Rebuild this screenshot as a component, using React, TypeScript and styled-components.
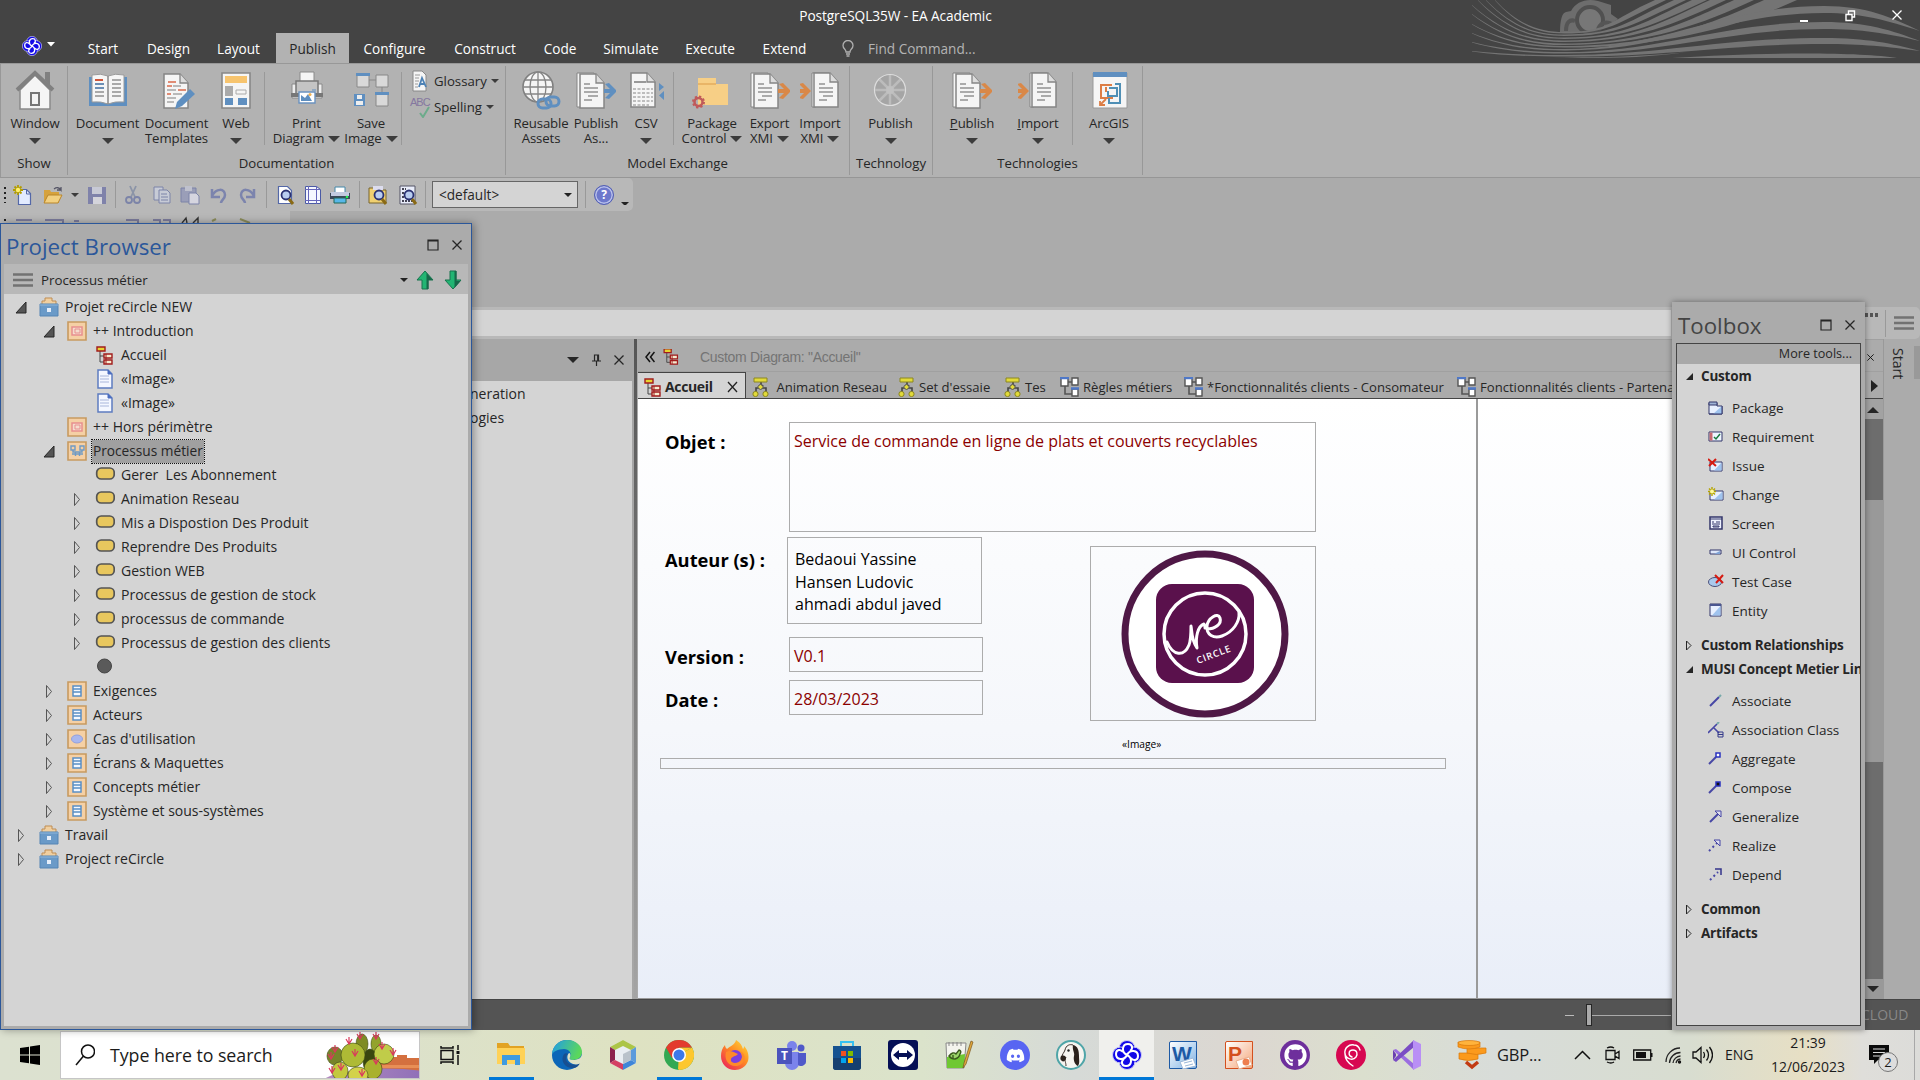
import React from 'react';
import styled, { createGlobalStyle, css } from 'styled-components';
import { FaDiscord, FaGithub } from 'react-icons/fa';

const Global = createGlobalStyle`
  * { box-sizing: border-box; }
  html, body { margin: 0; padding: 0; }
  body { width: 1920px; height: 1080px; overflow: hidden; background: #ababab; }
`;

const Screen = styled.div`
  position: relative;
  width: 1920px;
  height: 1080px;
  overflow: hidden;
  display: flex;
  flex-direction: column;
  background: #ababab;
  color: #262626;
  font: 14px/18px 'Open Sans', 'Noto Sans', sans-serif;
  white-space: pre;
  svg { display: block; flex: none; }
`;

/* ---------- title bar and ribbon tabs ---------- */
const Header = styled.header`
  position: relative;
  flex: none;
  height: 63px;
  background: #444;
  color: #fff;
  display: flex;
  flex-direction: column;
`;
const Decor = styled.svg`
  position: absolute;
  right: 0;
  top: 0;
`;
const TitleRow = styled.div`
  position: relative;
  height: 33px;
  padding: 0 18px 2px 0;
  display: flex;
  align-items: center;
`;
const Title = styled.div`
  flex: 1;
  padding-right: 8px;
  text-align: center;
  font-size: 13.7px;
  letter-spacing: -0.1px;
`;
const WinButtons = styled.div`
  display: flex;
  gap: 36px;
`;
const TabRow = styled.nav`
  position: relative;
  display: flex;
  height: 30px;
`;
const AppButton = styled.div`
  width: 70px;
  padding: 3px 0 0 22px;
  display: flex;
  gap: 5px;
`;
const MenuTab = styled.div<{ $w: number; $on?: boolean }>`
  width: ${p => p.$w}px;
  padding-top: 1px;
  display: flex;
  align-items: center;
  justify-content: center;
  font-size: 13.6px;
  ${p => p.$on && css`background: #b2b2b2; color: #262626;`}
`;
const Finder = styled.div`
  display: flex;
  align-items: center;
  gap: 14px;
  margin-left: 21px;
  padding-top: 1px;
  color: #b4b4b4;
  font-size: 13.6px;
`;

/* ---------- ribbon ---------- */
const Ribbon = styled.section`
  flex: none;
  height: 115px;
  display: flex;
  background: #b2b2b2;
  border-top: 1px solid #989898;
  border-bottom: 1px solid #969696;
  border-left: 1px solid #989898;
  font-size: 13.2px;
`;
const Group = styled.div<{ $w: number }>`
  width: ${p => p.$w}px;
  height: 109px;
  margin-top: 2px;
  border-right: 1px solid #989898;
  display: flex;
  flex-direction: column;
`;
const GroupBody = styled.div<{ $pad?: number }>`
  display: flex;
  height: 88px;
  padding: 4px 0 0 ${p => p.$pad || 0}px;
`;
const GroupLabel = styled.div`
  text-align: center;
`;
const BigButton = styled.div<{ $w: number }>`
  width: ${p => p.$w}px;
  flex: none;
  display: flex;
  flex-direction: column;
  align-items: center;
  line-height: 15px;
  text-align: center;
  letter-spacing: -0.1px;
`;
const IconSlot = styled.div`
  height: 46px;
`;
const Caption = styled.div<{ $drop?: boolean }>`
  display: flex;
  align-items: center;
  gap: 4px;
  height: 15px;
  padding-top: ${p => (p.$drop ? 5 : 0)}px;
`;
const Divider = styled.i<{ $h: number; $l?: number; $r?: number; $t?: number }>`
  flex: none;
  width: 1px;
  height: ${p => p.$h}px;
  margin: ${p => p.$t || 0}px ${p => p.$r || 0}px 0 ${p => p.$l || 0}px;
  background: #999;
`;
const Triangle = styled.i<{ $s?: number; $c?: string }>`
  flex: none;
  width: 0;
  height: 0;
  border: ${p => p.$s || 5}px solid transparent;
  border-top-color: ${p => p.$c || '#3c3c3c'};
  border-bottom-width: 0;
`;
const SmallColumn = styled.div`
  display: flex;
  flex-direction: column;
  gap: 4px;
  padding-left: 8px;
`;
const SmallButton = styled.div`
  display: flex;
  align-items: center;
  height: 22px;
  gap: 4px;
`;

/* ---------- tool strips ---------- */
const Strip = styled.div`
  flex: none;
  width: 633px;
  height: 33px;
  background: #b8b8b8;
  border-radius: 0 5px 5px 0;
  display: flex;
  align-items: center;
`;
const StripIcon = styled.div<{ $w: number; $dim?: boolean }>`
  width: ${p => p.$w}px;
  flex: none;
  display: flex;
  justify-content: center;
  opacity: ${p => (p.$dim ? 0.55 : 1)};
`;
const Combo = styled.div`
  flex: none;
  width: 146px;
  height: 27px;
  margin: 0 7px 0 6px;
  padding: 0 5px 0 6px;
  border: 1px solid #666;
  background: #d4d4d4;
  display: flex;
  align-items: center;
  justify-content: space-between;
  font-size: 13.6px;
`;
const SecondStrip = styled.div`
  flex: none;
  width: 290px;
  height: 96px;
  background: linear-gradient(#b8b8b8 0 30px, #ababab 30px);
`;
const WideBar = styled.div`
  flex: none;
  height: 32px;
  background: #b8b8b8;
  border-radius: 0 5px 5px 0;
  display: flex;
  align-items: center;
  padding-right: 6px;
`;
const WideField = styled.div`
  width: 1671px;
  height: 26px;
  background: #d4d4d4;
`;

/* ---------- workspace ---------- */
const Work = styled.main`
  flex: none;
  height: 660px;
  display: flex;
`;
const SidePane = styled.aside`
  width: 634px;
  display: flex;
  flex-direction: column;
`;
const SideHead = styled.div`
  height: 42px;
  padding-right: 10px;
  display: flex;
  justify-content: flex-end;
  align-items: center;
  gap: 13px;
  background: #a7a7a7;
`;
const SideBody = styled.div`
  flex: 1;
  background: #d4d4d4;
  border-right: 2px solid #a6a6a6;
  padding: 1px 0 0 470px;
  line-height: 24px;
`;
const Splitter = styled.i`
  width: 4px;
  border-right: 1px solid #aaa;
  background: linear-gradient(#555, #a4a4a4);
`;
const Center = styled.section`
  width: 1245px;
  display: flex;
  flex-direction: column;
`;
const DiagramHead = styled.div`
  height: 33px;
  padding: 3px 9px 0 7px;
  display: flex;
  align-items: center;
  border-bottom: 1px solid #a0a0a0;
  border-top: 1px solid #a0a0a0;
  font-family: 'Liberation Sans', sans-serif;
  font-size: 14px;
  color: #747474;
  letter-spacing: -0.3px;
`;
const HeadText = styled.span`
  flex: 1;
`;
const DiagramTabs = styled.div`
  height: 27px;
  display: flex;
  overflow: hidden;
  border-bottom: 1px solid #444;
`;
const DiagramTab = styled.div<{ $w: number; $on?: boolean }>`
  flex: none;
  width: ${p => p.$w}px;
  height: ${p => (p.$on ? 27 : 26)}px;
  padding: 3px 0 0 6px;
  display: flex;
  align-items: center;
  gap: 4px;
  font-size: 13.1px;
  ${p => p.$on && css`
    padding: 1px 0 0 5px;
    background: #d4d4d4;
    border: 1px solid #444;
    border-width: 1px 1px 0 0;
    font-weight: 700;
    font-size: 14px;
    letter-spacing: -0.35px;
  `}
`;
const CanvasRow = styled.div`
  flex: 1;
  display: flex;
`;
const Canvas = styled.div`
  position: relative;
  flex: 1;
  background: linear-gradient(#fff, #f5f7fb 55%, #e9eef8);
  border-bottom: 1px solid #999;
  color: #000;
`;
const Placed = styled.div<{ $x: number; $y: number; $w?: number; $h?: number; $box?: boolean; $red?: boolean; $bold?: boolean; $pad?: string }>`
  position: absolute;
  left: ${p => p.$x - 638}px;
  top: ${p => p.$y - 399}px;
  ${p => p.$w && css`width: ${p.$w}px;`}
  ${p => p.$h && css`height: ${p.$h}px;`}
  ${p => p.$box && css`border: 1px solid #acacac;`}
  color: ${p => (p.$red ? '#8b0000' : '#000')};
  font-size: ${p => (p.$bold ? 18.3 : 16)}px;
  font-weight: ${p => (p.$bold ? 700 : 400)};
  line-height: 22.5px;
  padding: ${p => p.$pad || 0};
`;
const Stereo = styled(Placed)`
  font-size: 10.2px;
`;
const PageEdge = styled.i`
  position: absolute;
  left: 838px;
  top: 0;
  bottom: 0;
  width: 2px;
  background: #9a9a9a;
`;
const ScrollColumn = styled.div`
  width: 18px;
  display: flex;
  flex-direction: column;
`;
const ScrollBtn = styled.div<{ $flip?: boolean }>`
  height: 20px;
  background: ${p => (p.$flip ? '#999' : '#a2a2a2')};
  display: flex;
  align-items: center;
  justify-content: center;
  padding-right: 3px;
`;
const ScrollPart = styled.div<{ $h: number; $c: string }>`
  height: ${p => p.$h}px;
  background: ${p => p.$c};
`;
const RightRail = styled.aside`
  flex: 1;
  display: flex;
  justify-content: space-between;
  border-left: 1px solid #999;
`;
const Vertical = styled.div`
  writing-mode: vertical-rl;
  padding: 9px 0 0 5px;
  height: 50px;
  font-size: 14px;
`;
const RailEnd = styled.i`
  width: 6px;
  height: 33px;
  margin-top: 7px;
  background: #999;
`;
const Status = styled.footer`
  flex: none;
  height: 31px;
  background: #545454;
  border-top: 1px solid #444;
  display: flex;
  align-items: center;
  padding-left: 1565px;
  color: #888;
`;
const Minus = styled.i`
  width: 9px;
  height: 1px;
  background: #bbb;
`;
const Knob = styled.i`
  width: 6px;
  height: 22px;
  margin-left: 12px;
  background: #aaa;
  border: 1px solid #262626;
`;
const Track = styled.i`
  width: 79px;
  height: 1px;
  background: #aaa;
`;
const Cloud = styled.span`
  margin-left: 190px;
`;

/* ---------- floating windows ---------- */
const BrowserWindow = styled.section`
  position: absolute;
  left: 0;
  top: 223px;
  width: 472px;
  height: 807px;
  padding: 0 3px 3px;
  border: 1px solid #2b579a;
  background: #ababab;
  box-shadow: 2px 0 8px rgba(0, 0, 0, 0.35);
  display: flex;
  flex-direction: column;
`;
const WindowTitle = styled.div<{ $blue?: boolean; $h: number }>`
  flex: none;
  height: ${p => p.$h}px;
  display: flex;
  align-items: center;
  justify-content: space-between;
  padding: ${p => (p.$blue ? '5px 6px 0 2px' : '6px 6px 0 2px')};
  color: ${p => (p.$blue ? '#2b579a' : '#444')};
  font-size: 22.3px;
  line-height: 30px;
`;
const WindowIcons = styled.div<{ $b?: number; $gap?: number; $l?: number }>`
  display: flex;
  align-items: center;
  gap: ${p => p.$gap || 13}px;
  padding-bottom: ${p => p.$b || 0}px;
  margin-left: ${p => p.$l || 0}px;
`;
const BrowserBar = styled.div`
  flex: none;
  height: 30px;
  padding: 1px 6px 0 9px;
  display: flex;
  align-items: center;
  background: #b8b8b8;
`;
const BarText = styled.div`
  flex: 1;
  padding-left: 8px;
  font-size: 13.3px;
`;
const Tree = styled.div`
  flex: 1;
  padding-top: 1px;
  background: #d4d4d4;
`;
const Row = styled.div<{ $level: number }>`
  height: 24px;
  padding-left: ${p => 7 + 28 * p.$level}px;
  display: flex;
  align-items: center;
`;
const Expander = styled.div`
  width: 28px;
  display: flex;
  padding-left: 4px;
`;
const RowIcon = styled.div`
  width: 22px;
`;
const RowText = styled.div<{ $sel?: boolean }>`
  padding: 0 1px 1px;
  margin-left: 3px;
  line-height: 22px;
  ${p => p.$sel && css`
    font-size: 13.7px;
    background: #a0a0a0;
    outline: 1px dotted #111;
  `}
`;
const ToolboxWindow = styled.section`
  position: absolute;
  left: 1672px;
  top: 302px;
  width: 193px;
  height: 728px;
  padding: 0 4px 4px;
  background: #ababab;
  box-shadow: 0 0 6px rgba(0, 0, 0, 0.4);
  display: flex;
  flex-direction: column;
`;
const ToolFrame = styled.div`
  flex: 1;
  border: 1px solid #444;
  background: #d4d4d4;
  overflow: hidden;
`;
const MoreTools = styled.div`
  height: 20px;
  padding-right: 8px;
  background: #a9a9a9;
  text-align: right;
  line-height: 20px;
  font-size: 12.6px;
`;
const ToolHead = styled.div`
  height: 24px;
  padding-left: 8px;
  display: flex;
  align-items: center;
  font-weight: 700;
  font-size: 13.5px;
  letter-spacing: -0.2px;
`;
const ToolArrow = styled.div`
  flex: none;
  width: 16px;
`;
const ToolList = styled.div`
  padding: 5px 0 8px 31px;
`;
const ToolItem = styled.div`
  height: 29px;
  display: flex;
  align-items: center;
  gap: 8px;
  font-size: 13.5px;
`;

/* ---------- taskbar ---------- */
const Taskbar = styled.footer`
  flex: none;
  height: 50px;
  display: flex;
  align-items: center;
  background: linear-gradient(90deg, #dce1d0, #dce1cb 20%, #dee2c2 33%, #dbe3cb 48%, #d6dad7 56%, #dcd7d1 65%, #dbdfce 71%, #d8dcd9 78%, #d8ddd0 88%, #e7dfc4 94%, #dfdeda 97%, #dcdcd9);
  color: #1b1b1b;
`;
const StartButton = styled.div`
  flex: none;
  width: 60px;
  padding-left: 20px;
`;
const Search = styled.div`
  flex: none;
  width: 360px;
  height: 48px;
  padding-left: 14px;
  background: #fff;
  border: 1px solid #c6c6c6;
  display: flex;
  align-items: center;
  gap: 15px;
  overflow: hidden;
  font-size: 17.8px;
  letter-spacing: -0.05px;
`;
const TaskView = styled.div`
  flex: none;
  width: 63px;
  padding-left: 20px;
`;
const TaskItem = styled.div<{ $mark?: number; $on?: boolean }>`
  flex: none;
  width: ${p => (p.$on ? 55 : 56)}px;
  margin-right: ${p => (p.$on ? 1 : 0)}px;
  height: 50px;
  display: flex;
  align-items: center;
  justify-content: center;
  background: ${p => (p.$on ? '#f0f0ed' : 'none')};
  ${p => p.$mark && css`
    background-image: linear-gradient(#0078d7, #0078d7);
    background-size: ${p.$mark}px 3px;
    background-position: center bottom;
    background-repeat: no-repeat;
  `}
`;
const RoundApp = styled.div<{ $c: string }>`
  width: 30px;
  height: 30px;
  border-radius: 50%;
  background: ${p => p.$c};
  color: #fff;
  display: flex;
  align-items: center;
  justify-content: center;
`;
const Tray = styled.div`
  flex: 1;
  display: flex;
  align-items: center;
  padding-left: 22px;
`;
const TraySlot = styled.div<{ $w: number }>`
  flex: none;
  width: ${p => p.$w}px;
  text-align: left;
`;
const Money = styled(TraySlot)`
  font-size: 16.5px;
  letter-spacing: -0.2px;
`;
const Clock = styled.div`
  width: 100px;
  text-align: center;
  line-height: 24px;
  letter-spacing: -0.05px;
  padding-bottom: 1px;
`;
const ShowDesktop = styled.i`
  width: 1px;
  height: 50px;
  margin-left: 16px;
  background: #a8a8a8;
`;

/* ---------- drawings ---------- */
type G = { w?: number; h?: number; vb?: string; children?: React.ReactNode };
const Svg = ({ w = 40, h = 40, vb, children }: G) => (
  <svg width={w} height={h} viewBox={vb || `0 0 ${w} ${h}`} fill="none">{children}</svg>
);

const CloseX = ({ s = 10, c = '#262626' }) => (
  <Svg w={s} h={s} vb="0 0 10 10"><path d="M.5 .5l9 9M9.5 .5l-9 9" stroke={c} strokeWidth="1.3" /></Svg>
);
const MaxBox = () => <Svg w={12} h={12}><path d="M1 1h10v10H1zM1 2h10" stroke="#262626" strokeWidth="1.2" /></Svg>;
const Burger = () => <Svg w={20} h={14}><path d="M0 1.5h20M0 7h20M0 12.5h20" stroke="#727272" strokeWidth="2.4" /></Svg>;

/* Four interlocking lobes around the centre. */
const EaLogo = ({ s = 20 }) => (
  <Svg w={s} h={s} vb="0 0 30 30">
    <g fill="#1208e8" stroke="#cfcff5" strokeWidth="1">
      <circle cx="15" cy="8.5" r="8" /><circle cx="21.5" cy="15" r="8" /><circle cx="15" cy="21.5" r="8" /><circle cx="8.5" cy="15" r="8" />
    </g>
    <circle cx="15" cy="15" r="9" fill="#1208e8" />
    <path d="M15 15C9 12 10 4 16 4c5 0 5 5 2 7M15 15c3-6 11-5 11 1 0 5-5 5-7 2M15 15c6 3 5 11-1 11-5 0-5-5-2-7M15 15c-3 6-11 5-11-1 0-5 5-5 7-2" stroke="#fff" strokeWidth="2" />
  </Svg>
);

const House = () => (
  <Svg><path d="M30 2h5v14l-5-6z" fill="#808080" /><path d="M5 20L20 5l15 15v19H5z" fill="#f5f5f5" stroke="#8a8a8a" strokeWidth="1.5" /><path d="M2 20L20 3l18 17" stroke="#808080" strokeWidth="4" /><path d="M16 23h8v12h-8z" stroke="#777" strokeWidth="2" /></Svg>
);
const Book = () => (
  <Svg><path d="M1 7h38v29H1z" fill="#5f8fc0" /><path d="M4 5q9-2 16 1 7-3 16-1v27q-9-1-16 2-7-3-16-2z" fill="#f6f6f6" stroke="#9a9a9a" /><path d="M20 6v28" stroke="#888" strokeWidth="1.5" /><path d="M7 10h8" stroke="#d0563a" strokeWidth="2" /><path d="M7 14h9M7 18h9" stroke="#6d8fb5" strokeWidth="2" /><path d="M7 22h9M7 26h9M24 10h9M24 14h9M24 18h9M24 22h9M24 26h9" stroke="#aaa" strokeWidth="2" /></Svg>
);
const Sheet = ({ x = 4, y = 3 }) => (
  <g transform={`translate(${x} ${y})`}>
    <path d="M1 1h16l8 9v25H1z" fill="#f5f5f5" stroke="#858585" strokeWidth="1.5" />
    <path d="M17 1v9h8" fill="#ddd" stroke="#858585" strokeWidth="1.3" />
  </g>
);
const Template = () => (
  <Svg><Sheet x={6} /><path d="M11 12h8M10 16h5M21 20h8M10 24h4" stroke="#d9694b" strokeWidth="1.6" /><path d="M16 16h8M10 20h9M16 24h9M10 28h9M10 32h7" stroke="#a5a5a5" strokeWidth="1.6" /><path d="M18 39l2-7 13-13 5 5-13 12z" fill="#5f8fc0" /></Svg>
);
const WebIcon = () => (
  <Svg><path d="M6 3h28v35H6z" fill="#f5f5f5" stroke="#888" strokeWidth="1.6" /><path d="M9 6h22v7H9z" fill="#f7c46e" /><path d="M9 16h8v10H9z" fill="#aaa" /><path d="M20 20h10v4H20z" stroke="#aaa" /><path d="M9 28h8v7H9zM22 28h9v7h-9z" fill="#5f8fc0" /></Svg>
);
const Printer = () => (
  <Svg><path d="M13 2h14v10H13z" fill="#f5f5f5" stroke="#8a8a8a" /><path d="M5 14h30v14H5z" fill="#eee" stroke="#8a8a8a" /><path d="M9 11h22v14H9z" fill="#c4c4c4" stroke="#777" strokeWidth="1.5" /><path d="M4 23h32v4H4z" fill="#777" /><path d="M12 22h16v11H12z" fill="#fff" stroke="#6b93c0" strokeWidth="1.4" /><path d="M14 31v-6l4 3 3-4 4 7z" fill="#5f8fc0" /><circle cx="23" cy="24.500" r="1.500" fill="#f0b050" /><path d="M25 20h4" stroke="#5f8fc0" /></Svg>
);
const SaveImage = () => (
  <Svg><g fill="#d9d9d9" stroke="#888"><path d="M18 10h9M31 16v8" /><path d="M6 5h12v12H6zM25 5h12v12H25zM25 24h12v12H25z" /></g><path d="M5 3h14v3H5zM24 22h14v3H24z" fill="#5f8fc0" /><path d="M3 24h11v12H3z" fill="#5f8fc0" /><path d="M6 25h5v4H6zM5 31h7v4H5z" fill="#eee" /></Svg>
);
const ChainGlobe = () => (
  <Svg><circle cx="17" cy="17" r="15" fill="#f5f5f5" stroke="#808080" strokeWidth="1.6" /><g stroke="#858585" strokeWidth="1.3"><path d="M17 2v30M2 17h30M4 10h26M4 24h26" /><ellipse cx="17" cy="17" rx="8" ry="15" /></g><g stroke="#5f8fc0" strokeWidth="3"><rect x="17" y="29" width="13" height="9" rx="4.500" /><rect x="25" y="27" width="13" height="9" rx="4.500" /></g></Svg>
);
const PublishDoc = ({ c = '#5f8fc0' }) => (
  <Svg><path d="M1 3h17v4H5v30H1z" fill="#f5f5f5" stroke="#858585" /><Sheet x={3} y={3} /><path d="M8 14h6M8 18h14M8 22h14M12 26h10M8 30h8" stroke="#929292" strokeWidth="1.5" /><path d="M28 19h6l-5-5 4-1 8 8-8 8-4-1 5-5h-6z" fill={c} /></Svg>
);
const ImportDoc = () => (
  <Svg><g transform="translate(11 0)"><path d="M1 3h17v4H5v30H1z" fill="#f5f5f5" stroke="#858585" /><Sheet x={2} y={2} /><path d="M8 14h6M8 18h14M8 22h14M12 26h10M8 30h8" stroke="#929292" strokeWidth="1.5" /></g><path d="M-2 19h6l-5-5 4-1 8 8-8 8-4-1 5-5h-6z" fill="#d98848" /></Svg>
);
const Csv = () => (
  <Svg><Sheet x={4} y={2} /><path d="M8 12h12" stroke="#999" strokeWidth="2" /><path d="M7 19h20M7 23h20M7 27h20M7 31h20M7 35h16" stroke="#aaa" strokeWidth="1.7" strokeDasharray="3 1.500" /><path d="M33 13l5 4-5 4zM38 21v9l-5-4.500z" fill="#5f8fc0" /></Svg>
);
const Folder = () => (
  <Svg><path d="M6 8h18v6h12v21H6z" fill="#f7cf86" /><path d="M6 14h18" stroke="#e4ad5c" strokeWidth="1.500" /><circle cx="6.500" cy="32" r="4" stroke="#c05a5a" strokeWidth="2.500" /><circle cx="6.500" cy="32" r="5.500" stroke="#c05a5a" strokeWidth="2" strokeDasharray="2.200 2.100" /></Svg>
);
const Wheel = () => (
  <Svg><circle cx="19" cy="20" r="15.500" fill="#a5a5a5" stroke="#ddd" strokeWidth="1.200" /><path d="M19 5v30M4 20h30M8.500 9.500l21 21M8.500 30.500l21-21" stroke="#bcbcbc" strokeWidth="2.500" /><circle cx="19" cy="20" r="4" fill="#c1c1c1" /></Svg>
);
const ArcGis = () => (
  <Svg><path d="M4 3h34v35H4z" fill="#f5f5f5" stroke="#999" /><path d="M4 2h34v5H4z" fill="#5f8fc0" /><path d="M23 15H12v13h12M17 22v-5" stroke="#dc7d45" strokeWidth="2" /><path d="M11 31v4h5M11 35l6-6" stroke="#dc7d45" strokeWidth="1.800" /><path d="M20 18h8v8h-9v-5M26 14h5v5M31 14v19H20v-5" stroke="#4f8fb5" strokeWidth="2" /></Svg>
);

const Glossary = () => (
  <Svg w={20} h={22}><path d="M3 1h9l4 4v16H3z" fill="#f5f5f5" stroke="#888" /><path d="M5 5h5M5 8h4M5 11h4M5 14h3M5 17h3" stroke="#999" /><path d="M9 17l3-9 4 9M10 14h5" stroke="#4d82b5" strokeWidth="1.800" /></Svg>
);
const AbcMark = styled.div`
  position: relative;
  width: 20px;
  height: 22px;
  color: #8577a0;
  font: 11px/13px 'Liberation Sans', sans-serif;
  letter-spacing: -1px;
`;
const Check = styled.svg`
  position: absolute;
  left: 9px;
  top: 10px;
`;

const Bulb = () => <Svg w={12} h={17}><path d="M4 12C4 9 1 9 1 5.500a5 5 0 0 1 10 0C11 9 8 9 8 12zM4 14h4M4.500 16h3" stroke="#b0b0b0" strokeWidth="1.300" /></Svg>;

const Page = ({ fill = '#eef2ff' }) => <path d="M3.500 1.500h9l4 4v13h-13z" fill={fill} stroke="#5468a8" strokeWidth="1.200" />;
const Glass = () => <g><circle cx="11" cy="10" r="4.500" fill="#b9cdf0" stroke="#2b3272" strokeWidth="1.800" /><path d="M14 14l4 5" stroke="#8a6a15" strokeWidth="3" /></g>;
const Strips: Record<string, React.ReactNode> = {
  new: <><path d="M5.500 4.500h8l4 4v11h-12z" fill="#e2ebff" stroke="#5468a8" strokeWidth="1.200" /><path d="M13.500 5v4h4" stroke="#5468a8" /><path d="M5 0v10M0 5h10M1.500 1.500l7 7M8.500 1.500l-7 7" stroke="#b39c00" strokeWidth="1.800" /><circle cx="5" cy="5" r="2.200" fill="#ffef6e" /></>,
  open: <><path d="M1 18V5h6l1 2h8v11z" fill="#d6a23c" /><path d="M1 18l4-8h14l-4 8z" fill="#f2d080" stroke="#b8862c" /><path d="M11 4q4-3 7 1v-3M18 5h-4" stroke="#556" strokeWidth="1.300" /></>,
  save: <><path d="M1 2h18v17H1z" fill="#5256a0" /><path d="M5 2h10v7H5z" fill="#d5d8ee" /><path d="M6 12h9v7H6z" fill="#ececf8" /></>,
  cut: <><path d="M7 1l5 11M13 1L8 12" stroke="#67779a" strokeWidth="1.800" /><circle cx="6" cy="15" r="3" stroke="#4c5a9c" strokeWidth="1.800" /><circle cx="14" cy="15" r="3" stroke="#4c5a9c" strokeWidth="1.800" /></>,
  copy: <g fill="#d5dbef" stroke="#4c5a9c"><path d="M2 2h9v13H2z" /><path d="M7 5h8l3 3v10H7z" /><path d="M9 9h6M9 12h7M9 15h7" /></g>,
  paste: <><path d="M1 3h15v14H1z" fill="#8289b8" stroke="#4c5a9c" /><path d="M5 1h7v5H5z" fill="#c5cadf" /><path d="M9 8h7l3 3v8H9z" fill="#eef" stroke="#4c5a9c" /></>,
  undo: <path d="M3 4v8h8M3 11c4-8 13-8 13-1 0 4-4 5-4 8" stroke="#4c5aa5" strokeWidth="2.500" />,
  redo: <path d="M17 4v8H9M17 11C13 3 4 3 4 10c0 4 4 5 4 8" stroke="#4c5aa5" strokeWidth="2.500" />,
  preview: <><Page fill="#fff" /><Glass /></>,
  layout: <><path d="M2.500 1.500h11l4 3v14h-15z" fill="#f5f7ff" stroke="#4a5aa5" /><path d="M5.500 1v18M13.500 1v18M2 4.500h15M2 15.500h15" stroke="#66b" /></>,
  print: <><path d="M5 2h10v6H5z" fill="#fff" stroke="#48a" /><path d="M0 8h20v6H0z" fill="#3c4757" /><path d="M1 7h18v4H1z" fill="#c3cbe0" /><path d="M4 13h12v5H4z" fill="#57b7e8" stroke="#265" /><circle cx="17" cy="12" r="1.300" fill="#2e5" /></>,
  find: <><path d="M1 3h7l1 2h9v13H1z" fill="#f0d070" stroke="#78652c" /><path d="M5 1h10v4H5z" fill="#dde" /><Glass /></>,
  find2: <><path d="M2 1h15v18H2z" fill="#e9edfa" stroke="#556" /><path d="M4 4h4M4 8h3M4 12h4M4 16h11" stroke="#445" strokeWidth="2" strokeDasharray="2 1" /><Glass /></>,
};
const StripGlyph = ({ name }: { name: string }) => <Svg w={20} h={20}>{Strips[name]}</Svg>;
const HelpIcon = styled.div`
  flex: none;
  width: 20px;
  height: 20px;
  border-radius: 50%;
  background: #6d78cc;
  border: 1px solid #5360b4;
  box-shadow: inset 0 0 0 1.5px #b9c0ea;
  color: #fff;
  font-weight: 700;
  font-size: 12px;
  line-height: 18px;
  text-align: center;
`;

const Open = () => <Svg w={12} h={13}><path d="M11 1v11H1z" fill="#555" stroke="#262626" /></Svg>;
const Shut = () => <Svg w={12} h={15}><path d="M3.500 1.500l5 6-5 6z" stroke="#555" /></Svg>;

const treeIcons: Record<string, React.ReactNode> = {
  root: <><path d="M3 8V4h3V1h7v3h4v4z" fill="#f0cfa0" stroke="#bf8d53" /><path d="M1 7h18v12H1z" fill="#6a9ac8" stroke="#5585b5" /><path d="M1 8h18" stroke="#8fb6da" /><path d="M8 11h4v4H8z" fill="#e5eefa" /></>,
  pkg: <><path d="M1 1h18v18H1z" fill="#f5d0a5" stroke="#c79a60" strokeWidth="1.600" /><path d="M5 6h10v8H5z" fill="#f5dccd" stroke="#e78f8f" strokeWidth="1.500" /><path d="M8 8h5v4H8z" stroke="#e78f8f" /></>,
  proc: <><path d="M1 1h18v18H1z" fill="#f5d0a5" stroke="#c79a60" strokeWidth="1.600" /><path d="M4 5h4v4H4zM13 5h4v4h-4zM6 9v2h9V9M8.500 11v4M12.500 11v4M5 13h11" stroke="#6f9ac5" strokeWidth="1.400" /></>,
  cls: <><path d="M1 1h18v18H1z" fill="#f5d0a5" stroke="#c79a60" strokeWidth="1.600" /><path d="M6 5h8v10H6z" fill="#f4f8ff" stroke="#5a8fc5" strokeWidth="1.500" /><path d="M6 8h8M6 11h8" stroke="#5a8fc5" strokeWidth="1.500" /></>,
  use: <><path d="M1 1h18v18H1z" fill="#f5d0a5" stroke="#c79a60" strokeWidth="1.600" /><ellipse cx="10" cy="10" rx="5.500" ry="4" fill="#a9b7ee" stroke="#93a0dd" /></>,
  diagram: <><path d="M5 6v11h4M5 11h4" stroke="#444" /><path d="M2 2h8v4H2z" fill="#e8d431" stroke="#a11c1c" strokeWidth="1.400" /><path d="M9 9h8v4H9zM9 15h8v4H9z" fill="#f6ecd0" stroke="#a11c1c" strokeWidth="1.400" /><path d="M11 9v10" stroke="#a11c1c" /></>,
  doc: <><path d="M3 1h10l4 4v14H3z" fill="#f4f7ff" stroke="#5d7cc0" strokeWidth="1.500" /><path d="M13 1v4h4" fill="#4a6cc0" stroke="#4a6cc0" /><path d="M5 7h9M5 10h9M5 13h9" stroke="#a9b6da" /></>,
  act: <rect x="1.700" y="3" width="17.500" height="11" rx="4.500" fill="#e8c75e" stroke="#545454" strokeWidth="1.700" />,
  dot: <circle cx="9.500" cy="9" r="7" fill="#5a5a5a" stroke="#444" />,
};
const tree: [number, string, string, string][] = [
  [0, 'o', 'root', 'Projet reCircle NEW'], [1, 'o', 'pkg', '++ Introduction'], [2, '', 'diagram', 'Accueil'], [2, '', 'doc', '«Image»'], [2, '', 'doc', '«Image»'],
  [1, '', 'pkg', '++ Hors périmètre'], [1, 'o', 'proc', 'Processus métier'], [2, '', 'act', 'Gerer  Les Abonnement'], [2, 's', 'act', 'Animation Reseau'],
  [2, 's', 'act', 'Mis a Dispostion Des Produit'], [2, 's', 'act', 'Reprendre Des Produits'], [2, 's', 'act', 'Gestion WEB'], [2, 's', 'act', 'Processus de gestion de stock'],
  [2, 's', 'act', 'processus de commande'], [2, 's', 'act', 'Processus de gestion des clients'], [2, '', 'dot', ''],
  [1, 's', 'cls', 'Exigences'], [1, 's', 'cls', 'Acteurs'], [1, 's', 'use', "Cas d'utilisation"], [1, 's', 'cls', 'Écrans & Maquettes'], [1, 's', 'cls', 'Concepts métier'],
  [1, 's', 'cls', 'Système et sous-systèmes'], [0, 's', 'root', 'Travail'], [0, 's', 'root', 'Project reCircle'],
];
const GreenArrow = ({ down }: { down?: boolean }) => (
  <Svg w={18} h={20}><path d={down ? 'M6 1h6v9h5l-8 9-8-9h5z' : 'M6 19h6v-9h5L9 1l-8 9h5z'} fill="#22b573" stroke="#18744e" /><path d={down ? 'M10.500 1h2v10h4l-6 7z' : 'M10.500 19h2v-9h4l-6-7z'} fill="#17684a" /></Svg>
);

const actTab = <Svg w={17} h={20}><path d="M9 5v6M4 15v-4h10v4M7 8l2 3 2-3" stroke="#444" strokeWidth="1.600" /><path d="M2 1h13v4H2z" fill="#e2da3a" stroke="#8b8620" /><path d="M8.500 7l3 3-3 3-3-3z" fill="#e2da3a" stroke="#555" /><circle cx="3.500" cy="17" r="2.600" fill="#e2da3a" stroke="#8b8620" /><circle cx="13.500" cy="17" r="2.600" fill="#e2da3a" stroke="#8b8620" /></Svg>;
const clsTab = <Svg w={19} h={20}><path d="M8 5h5M5 9v8h7" stroke="#555" strokeWidth="1.600" /><g fill="#fff" stroke="#555" strokeWidth="1.400"><path d="M1 1h7v8H1z" /><path d="M12 1h6v7h-6z" /><path d="M12 12h6v7h-6z" /></g><path d="M0 1h9M11 11.500h8" stroke="#4f78c8" strokeWidth="2.500" /></Svg>;
const diagTab = <Svg w={18} h={20}>{treeIcons.diagram}</Svg>;

const toolIcons: Record<string, React.ReactNode> = {
  Package: <><path d="M1 3h8v3h5v8H1z" fill="#e8f0ff" stroke="#33366a" /><path d="M14 6v8H5z" fill="#9fc3ee" /><path d="M1 2h8v3H1z" fill="#9fb3d5" stroke="#33366a" /><path d="M14 6v8H1" stroke="#33366a" /></>,
  Requirement: <><path d="M1 3h13v9H1z" fill="#eef5ff" stroke="#33366a" /><path d="M1.500 3.500h3v8h-3z" fill="#c86a70" /><path d="M6 8l2 2 4-5" stroke="#187a3c" strokeWidth="1.500" /></>,
  Issue: <><path d="M2 4h12v9H2z" fill="#e8f0ff" stroke="#33366a" /><path d="M13.500 4.500v8H6z" fill="#9fc3ee" /><path d="M0 1l8 7M8 1L1 8" stroke="#d61b12" strokeWidth="2" /></>,
  Change: <><path d="M2 4h13v9H2z" fill="#e8f0ff" stroke="#33366a" /><path d="M14.500 4.500v8H6z" fill="#9fc3ee" /><path d="M4 0v9M0 4.500h8M1 1.500l6 6M7 1.500l-6 6" stroke="#b5a400" strokeWidth="1.400" /><circle cx="4" cy="4.500" r="2" fill="#fff9a0" /></>,
  Screen: <><path d="M2 1h12v12H2z" fill="#eef2ff" stroke="#33366a" strokeWidth="1.500" /><path d="M2 3h12M4 6h2M8 6h4M4 8h8M5 10h6v1H5z" stroke="#33366a" /></>,
  'UI Control': <><path d="M2 5h11v4H2z" fill="#dfe8fa" stroke="#33366a" /><path d="M12 6v3H6z" fill="#7fa3d6" /></>,
  'Test Case': <><ellipse cx="7" cy="8" rx="6.500" ry="4.500" fill="#a9c9ec" stroke="#4a4e78" /><path d="M7 1l8 8M15 1L8 9" stroke="#d61b12" strokeWidth="2" /></>,
  Entity: <><path d="M2 1h11v12H2z" fill="#e8f0ff" stroke="#33366a" /><path d="M12.500 3v9.500H4z" fill="#9fc3ee" /><path d="M2 2h11" stroke="#4a5690" strokeWidth="2" /></>,
  Associate: <><path d="M2 13L11 4" stroke="#4747a5" strokeWidth="2" /><path d="M11 4l2-2" stroke="#7aa" strokeWidth="2" /></>,
  'Association Class': <><path d="M0 11L9 2M6 6l5 5" stroke="#4747a5" strokeWidth="1.600" /><path d="M9 2l2-2" stroke="#7aa" strokeWidth="2" /><path d="M10 10h5v5h-5zM10 12.500h5" stroke="#33388a" /></>,
  Aggregate: <><path d="M1 13l7-7" stroke="#4747a5" strokeWidth="2" /><path d="M8 2h4v4H8z" fill="#fff" stroke="#2a32c0" strokeWidth="1.500" /></>,
  Compose: <><path d="M1 13l7-7" stroke="#4747a5" strokeWidth="2" /><path d="M8 2h4v4H8z" fill="#111" stroke="#2a32c0" strokeWidth="1.500" /></>,
  Generalize: <><path d="M2 13l8-8" stroke="#4747a5" strokeWidth="2" /><path d="M7 2h6v6zM7 2l6 6" fill="#dde" stroke="#4747a5" /></>,
  Realize: <><path d="M1 13l8-8" stroke="#4747a5" strokeWidth="2" strokeDasharray="2 3" /><path d="M6 2h6v6z" fill="#dde" stroke="#4747a5" /></>,
  Depend: <><path d="M2 13l8-8" stroke="#4747a5" strokeWidth="2" strokeDasharray="2 3" /><path d="M7 2h6v6" stroke="#33338a" strokeWidth="1.500" /></>,
};
const Tools = ({ names }: { names: string[] }) => (
  <ToolList>{names.map(n => <ToolItem key={n}><Svg w={16} h={16}>{toolIcons[n]}</Svg>{n}</ToolItem>)}</ToolList>
);
const ToolGroup = ({ open, name }: { open?: boolean; name: string }) => (
  <ToolHead><ToolArrow>{open
    ? <Svg w={9} h={9}><path d="M8 1v7H1z" fill="#262626" /></Svg>
    : <Svg w={9} h={11}><path d="M1.500 1l4.500 4.500-4.500 4.500z" stroke="#262626" /></Svg>}</ToolArrow>{name}</ToolHead>
);

/* Waves share a dip at x = 92. The first ones leave through the top edge, the rest crest and run off to the right. */
const rising: [number, number, number, number, number][] = [
  [23, 0, 32, 183, 194], [14, 0, 34.5, 202, 214], [6, 0, 37.5, 220, 235], [0, 5, 40.5, 238, 254], [0, 14, 43.5, 262, 282], [0, 24, 46, 292, 325],
];
const cresting: [number, number, number, number, number][] = [
  [33, 49, 6, 13, 31], [42, 52, 22, 29, 41], [51, 55, 38, 44, 51],
];
const waveStart = (x: number, y: number, dip: number) => `M${x} ${y}C${x + (92 - x) * 0.35} ${y + (dip - y) * 0.8} ${92 - (92 - x) * 0.35} ${dip} 92 ${dip}`;
const waveEnd = (x: number, y: number, dip: number) => `C${92 - (92 - x) * 0.35} ${dip + 1.5} ${x + (92 - x) * 0.35} ${y + (dip - y) * 0.8 + 1.5} ${x} ${y + 0.5}z`;
const waves = [
  ...rising.map(([x, y, d, a, b]) => `${waveStart(x, y, d)}C${92 + (a - 92) * 0.5} ${d} ${a - 45} 20 ${a} 0L${b} 0C${b - 50} 23 ${92 + (b - 92) * 0.45} ${d + 1.5} 92 ${d + 1.5}${waveEnd(x, y, d)}`),
  ...cresting.map(([y, d, c, l, e]) => `${waveStart(0, y, d)}C190 ${d} 250 ${c} 352 ${c}C395 ${c} 420 ${(c + e) / 2 - 1} 448 ${e}C415 ${(c + e) / 2 + 2} 390 ${l} 352 ${l}C255 ${l} 195 ${d + 2} 92 ${d + 1.5}${waveEnd(0, y, d)}`),
  'M200 58C290 52 390 52 425 58z',
  'M80 57C130 58 180 56 215 52C180 57 150 58 110 58z',
];
const TitleDecor = () => (
  <Decor width="448" height="60" viewBox="0 0 448 60">
    <path d="M88 32c0-12 2-19 6-20l5-1C104 2 114-2 126 1l13 4 0 9 7 5-12 8-20 5z" fill="#6d6d6d" />
    <circle cx="118" cy="20" r="13" fill="#777" stroke="#505050" strokeWidth="4" />
    <path d="M94 31c0-9 4-12 9-10M126 30c1-7 8-9 14-6" stroke="#555" strokeWidth="4" fill="none" />
    {waves.map((d, i) => <path key={i} d={d} fill="#747474" />)}
  </Decor>
);

const Big = ({ w, icon, a, b, u, arrow }: { w: number; icon: React.ReactNode; a: string; b?: string; u?: boolean; arrow?: boolean }) => (
  <BigButton $w={w}>
    <IconSlot>{icon}</IconSlot>
    <Caption>{u ? <span><u>{a[0]}</u>{a.slice(1)}</span> : a}</Caption>
    <Caption $drop={!b}>{b}{arrow && <Triangle $s={6} />}</Caption>
  </BigButton>
);

/* taskbar application drawings */
const Explorer = <Svg w={30} h={30}><path d="M1 3h11l2 3h14v18H1z" fill="#e2a323" /><path d="M1 8h28v16H1z" fill="#ffd257" /><path d="M6 25V15h18v10h-5v-5h-8v5z" fill="#3f9be0" /></Svg>;
const Edge = <Svg w={30} h={30}><defs><linearGradient id="eg" x1="0" y1="0" x2="1" y2="0.300"><stop offset="0" stopColor="#1f9bea" /><stop offset="1" stopColor="#5bd85b" /></linearGradient></defs><circle cx="15" cy="15" r="15" fill="#0c66b8" /><path d="M0 14C1 5 8 0 15 0c9 0 15 6 15 12 0 5-4 8-9 8-3 0-4-1-3-3 2-4-1-8-6-8C6 9 1 12 0 14z" fill="url(#eg)" /><path d="M12 14c-4 6 0 14 9 14 3 0 6-2 7-5-5 3-14 2-14-5 0-2 1-3 2-4-1-1-3-1-4 0z" fill="#174f91" /><path d="M17 13c-3 3-2 9 4 11 4 1 7 0 9-2V13c0 5-4 7-9 7-3 0-4-1-3-3 1-2 0-4-1-4z" fill="#dee2c6" /></Svg>;
const Cube = <Svg w={30} h={30}><path d="M15 0l13 7v16l-13 7-13-7V7z" fill="#e9eef2" /><path d="M15 0l13 7-5 3-8-4-8 4-5-3z" fill="#acc547" /><path d="M2 7l5 3v10l-5 3z" fill="#8c2350" /><path d="M2 23l5-3 8 4v6z" fill="#d43f63" /><path d="M15 30v-6l8-4 5 3z" fill="#3f86d8" /><path d="M28 7l-5 3v10l5 3z" fill="#5b9bdc" /><path d="M15 14v10l8-4V10z" fill="#b9c2ca" /></Svg>;
const Chrome = <Svg w={30} h={30}><circle cx="15" cy="15" r="15" fill="#33a852" /><path d="M15 15L28 7.500A15 15 0 0 1 15 30l-1-1z" fill="#fdc72e" /><path d="M15 7.500h13L15 15z" fill="#fdc72e" /><path d="M2 7.500A15 15 0 0 1 28 7.500H15L8 18z" fill="#e33b2e" /><circle cx="15" cy="15" r="7" fill="#fff" /><circle cx="15" cy="15" r="5.500" fill="#3c79ea" /></Svg>;
const Firefox = <Svg w={30} h={30}><defs><linearGradient id="ff" x1="1" y1="0" x2="0.200" y2="1"><stop offset="0" stopColor="#ffe13c" /><stop offset="0.500" stopColor="#ff8a22" /><stop offset="1" stopColor="#ec2558" /></linearGradient></defs><path d="M16 0c5 3 6 6 7 9 1-1 1-2 1-3 5 5 5 12 4 15-2 6-8 9-13 9C7 30 1 24 1 16c0-4 1-8 4-11 0 2 1 3 2 4 3-3 8-4 9-9z" fill="url(#ff)" /><circle cx="15" cy="17" r="7" fill="#7b3fe0" /><path d="M6 12c5-3 9 1 12 2-3 3-6 2-7 5-1 5 7 5 10 1 2-3 1-7-1-9 7 3 6 13-3 15C8 27 4 19 6 12z" fill="#ff8a2a" /></Svg>;
const AppTile = styled.div<{ $c: string; $b: string }>`
  position: relative;
  width: 28px;
  height: 28px;
  padding-left: 2px;
  border: 1px solid ${p => p.$c};
  border-radius: 2px 0 2px 0;
  background: linear-gradient(135deg, #fff, ${p => p.$b});
  color: ${p => p.$c};
  font: 700 21px/24px 'Liberation Sans', sans-serif;
`;
const Paper = styled.svg`
  position: absolute;
  right: -1px;
  bottom: -1px;
`;
const WordTile = <AppTile $c="#1d5aa5" $b="#7fb2e4">W<Paper width="18" height="12" viewBox="0 0 18 12"><path d="M1 5l13-4 3 8-13 3z" fill="#fff" stroke="#9bb8d8" /><path d="M5 6l8-2M6 9l8-2" stroke="#9bb8d8" /></Paper></AppTile>;
const SlideTile = <AppTile $c="#d4501e" $b="#f5a67a">P<Paper width="18" height="14" viewBox="0 0 18 14"><path d="M1 6l13-4 3 8-13 4z" fill="#fff" stroke="#e8b090" /><circle cx="11" cy="7" r="3.500" fill="#ee7f50" /></Paper></AppTile>;
const TeamsMark = styled.div`
  position: relative;
  width: 30px;
  height: 30px;
`;
const TeamsT = styled.div`
  position: absolute;
  left: 1px;
  top: 8px;
  width: 15px;
  height: 16px;
  background: #4b53bc;
  color: #fff;
  font: 700 12px/16px 'Open Sans', sans-serif;
  text-align: center;
`;
const Teams = <TeamsMark><Svg w={30} h={30}><circle cx="16" cy="6" r="5" fill="#7b83eb" /><circle cx="25" cy="8" r="3.500" fill="#5059c9" /><path d="M9 12h14v11a7 7 0 0 1-14 0z" fill="#7b83eb" /><path d="M22 13h8v9a5 5 0 0 1-8 3z" fill="#5059c9" /></Svg><TeamsT>T</TeamsT></TeamsMark>;
const Store = <Svg w={30} h={30}><path d="M9 7V2h12v5" stroke="#35c1f1" strokeWidth="2" /><path d="M1 6h28v21a3 3 0 0 1-3 3H4a3 3 0 0 1-3-3z" fill="#155290" /><path d="M1 18h28v9a3 3 0 0 1-3 3H4a3 3 0 0 1-3-3z" fill="#153f70" /><path d="M9 11h5v5H9z" fill="#f25022" /><path d="M16 11h5v5h-5z" fill="#7fba00" /><path d="M9 18h5v5H9z" fill="#00a4ef" /><path d="M16 18h5v5h-5z" fill="#ffb900" /></Svg>;
const Viewer = <Svg w={30} h={30}><rect width="30" height="30" rx="3" fill="#050f55" /><circle cx="15" cy="15" r="12" fill="#fff" /><path d="M5 15l6-5v3h8v-3l6 5-6 5v-3h-8v3z" fill="#050f55" /></Svg>;
const Notepad = <Svg w={30} h={30}><path d="M2 3h20l-2 25H3z" fill="#f4f4ee" stroke="#888" /><path d="M3 17l18-3-1 14H3z" fill="#6fc832" /><path d="M5 2v4M9 2v4M13 2v4M17 2v4" stroke="#888" /><path d="M5 16q4-5 7-2l3-4q3 1 1 4-1 4-5 5-4 0-6-3zM9 15v4" stroke="#3b5a1c" strokeWidth="1.400" fill="#9bd468" /><path d="M27 1l2 1-7 22-3 4 1-5z" fill="#e0a83a" stroke="#7a5420" strokeWidth=".7" /></Svg>;
const Beaver = <Svg w={30} h={30}><circle cx="15" cy="15" r="14" fill="#f6f4f0" stroke="#4fa5a8" strokeWidth="2" /><path d="M17 5c5 1 6 6 6 11 0 4 1 7-1 10-3-1-5-6-4-10 1-3-2-6-1-11z" fill="#2b211c" /><path d="M9 10c1-5 5-6 8-5M9 10c-1 3-3 4-3 7M10 26c0-4-2-5 0-9" stroke="#3a2f2a" strokeWidth="1" /><path d="M5 16c3-1 5 0 5 2 0 3-3 4-4 3-2-1-2-3-1-5z" fill="#2b211c" /><circle cx="12.500" cy="10.500" r="1.200" fill="#222" /></Svg>;
const Swirl = <Svg w={22} h={24} vb="0 0 22 24"><path d="M12 14c-4-1-4-7 1-7 4 0 5 4 3 7-3 4-10 2-11-3C4 5 9 1 14 2c3 0 5 2 6 5M5 11c0 5 3 9 8 12" stroke="#fff" strokeWidth="1.400" strokeLinecap="round" /></Svg>;
const VStudio = <Svg w={30} h={30}><path d="M1 10l3-1L22 24v6z" fill="#9b6ee0" /><path d="M1 20l3 2L22 7V0z" fill="#7a4cc4" /><path d="M1 10v10l3-4v-2z" fill="#6a3fb0" /><path d="M21 0l8 4v22l-8 4z" fill="#b98ff5" /></Svg>;
const apps: { icon: React.ReactNode; mark?: number; on?: boolean }[] = [
  { icon: Explorer, mark: 45 }, { icon: Edge }, { icon: Cube }, { icon: Chrome, mark: 45 }, { icon: Firefox }, { icon: Teams }, { icon: Store }, { icon: Viewer }, { icon: Notepad },
  { icon: <RoundApp $c="#5865f2"><FaDiscord size={19} /></RoundApp> }, { icon: Beaver }, { icon: <EaLogo s={30} />, mark: 56, on: true },
  { icon: WordTile }, { icon: SlideTile },
  { icon: <RoundApp $c="#6e2f9c"><FaGithub size={23} /></RoundApp> }, { icon: <RoundApp $c="#d70751">{Swirl}</RoundApp> }, { icon: VStudio },
];

const Cactus = () => (
  <svg width="98" height="48" viewBox="0 0 98 48">
    <defs><linearGradient id="sand" x1="0" y1="0" x2="1" y2="0"><stop offset="0" stopColor="#b58cc0" /><stop offset="1" stopColor="#8f70b8" /></linearGradient></defs>
    <path d="M55 40V28h10v-2h8v-2h10v3h15v15H55z" fill="#d4703f" /><path d="M58 34h40v3H58z" fill="#e88f56" />
    <path d="M0 48c20-12 70-12 98-8v8z" fill="url(#sand)" />
    <g stroke="#3d4a12" strokeWidth=".6"><ellipse cx="52" cy="13" rx="5" ry="9" fill="#93a32c" /><ellipse cx="38" cy="13" rx="6" ry="10" fill="#7f8c25" /><ellipse cx="46" cy="30" rx="7" ry="12" fill="#39460f" /><ellipse cx="11" cy="25" rx="8" ry="9" fill="#77842a" /><ellipse cx="29" cy="24" rx="12" ry="12" fill="#aeba35" /><ellipse cx="60" cy="23" rx="10" ry="10" fill="#c0cc49" /><ellipse cx="49" cy="38" rx="9" ry="10" fill="#a9b12e" /><ellipse cx="16" cy="40" rx="8" ry="9" fill="#c3c83f" /><ellipse cx="34" cy="44" rx="10" ry="8" fill="#d3d24a" /></g>
    <g stroke="#d9395c" strokeWidth="1.200" fill="none">{[[11, 18], [25, 10], [31, 22], [36, 5], [52, 5], [58, 15], [69, 21], [52, 30], [8, 39], [38, 42], [17, 36], [7, 25]].map(([x, y]) => <path key={`${x}-${y}`} d={`M${x - 3} ${y - 2}l3 5 3-5M${x} ${y - 4}v7`} />)}</g>
  </svg>
);
const Badge = styled.div`
  position: absolute;
  left: 9px;
  top: 8px;
  width: 20px;
  height: 20px;
  border: 1px solid #777;
  border-radius: 50%;
  background: #ddd;
  font-size: 13px;
  line-height: 18px;
  text-align: center;
`;
const Notice = styled.div`
  position: relative;
  width: 29px;
  height: 22px;
  margin-left: 11px;
`;

const Logo = () => (
  <svg width="170" height="170" viewBox="0 0 170 170" fill="none">
    <circle cx="85" cy="85" r="80" fill="#fff" stroke="#4f1846" strokeWidth="7" />
    <rect x="36" y="35" width="98" height="99" rx="16" fill="#5a114c" />
    <circle cx="85" cy="85" r="41" stroke="#fff" strokeWidth="3.500" />
    <path d="M47 93c6 14 17 15 22 3 2-5 2-12 2-19 1 4 0 13 6 22-2-11 1-22 7-24 1 1 1 3 1 4M87 80c8 0 15-5 13-11-2-6-12 0-13 8-1 9 7 13 15 10 11-4 18-14 17-24" stroke="#fff" strokeWidth="3" strokeLinecap="round" strokeLinejoin="round" />
    <text x="0" y="0" transform="translate(78 115) rotate(-21)" fill="#fff" fontFamily="Open Sans, sans-serif" fontWeight="600" fontSize="9.500" letterSpacing="0.800">CIRCLE</text>
  </svg>
);

export default function App() {
  return (
    <Screen>
      <Global />
      <Header>
        <TitleDecor />
        <TitleRow>
          <Title>PostgreSQL35W - EA Academic</Title>
          <WinButtons>
            <Svg w={10} h={12}><path d="M1 11h8" stroke="#fff" strokeWidth="2" /></Svg>
            <Svg w={11} h={12}><path d="M3.500 4V1h6v6h-2M1 4.500h6v6H1z" stroke="#fff" strokeWidth="1.400" /></Svg>
            <CloseX c="#fff" />
          </WinButtons>
        </TitleRow>
        <TabRow>
          <AppButton><EaLogo s={20} /><Svg w={8} h={14}><path d="M0 6h8l-4 4.500z" fill="#fff" /></Svg></AppButton>
          {([['Start', 66], ['Design', 65], ['Layout', 75], ['Publish', 73], ['Configure', 91], ['Construct', 90], ['Code', 60], ['Simulate', 82], ['Execute', 76], ['Extend', 73]] as [string, number][]).map(([n, w]) => (
            <MenuTab key={n} $w={w} $on={n === 'Publish'}>{n}</MenuTab>
          ))}
          <Finder><Bulb />Find Command...</Finder>
        </TabRow>
      </Header>

      <Ribbon>
        <Group $w={67}>
          <GroupBody><Big w={68} icon={<House />} a="Window" arrow /></GroupBody>
          <GroupLabel>Show</GroupLabel>
        </Group>
        <Group $w={438}>
          <GroupBody $pad={3}>
            <Big w={73} icon={<Book />} a="Document" arrow />
            <Big w={65} icon={<Template />} a="Document" b="Templates" />
            <Big w={54} icon={<WebIcon />} a="Web" arrow />
            <Divider $h={73} $l={1} $r={4} $t={2} />
            <Big w={75} icon={<Printer />} a="Print" b="Diagram" arrow />
            <Big w={54} icon={<SaveImage />} a="Save" b="Image" arrow />
            <Divider $h={73} $l={3} $t={2} />
            <SmallColumn>
              <SmallButton><Glossary />Glossary<Triangle $s={4} /></SmallButton>
              <SmallButton>
                <AbcMark>ABC<Check width="11" height="12" viewBox="0 0 11 12" fill="none"><path d="M1 7l3 4 6-10" stroke="#6cab8b" strokeWidth="2" /></Check></AbcMark>
                Spelling<Triangle $s={4} />
              </SmallButton>
            </SmallColumn>
          </GroupBody>
          <GroupLabel>Documentation</GroupLabel>
        </Group>
        <Group $w={344}>
          <GroupBody $pad={5}>
            <Big w={60} icon={<ChainGlobe />} a="Reusable" b="Assets" />
            <Big w={50} icon={<PublishDoc />} a="Publish" b="As..." />
            <Big w={50} icon={<Csv />} a="CSV" arrow />
            <Divider $h={73} $l={2} $r={5} $t={2} />
            <Big w={66} icon={<Folder />} a="Package" b="Control" arrow />
            <Big w={49} icon={<PublishDoc c="#d98848" />} a="Export" b="XMI" arrow />
            <Big w={52} icon={<ImportDoc />} a="Import" b="XMI" arrow />
          </GroupBody>
          <GroupLabel>Model Exchange</GroupLabel>
        </Group>
        <Group $w={83}>
          <GroupBody><Big w={81} icon={<Wheel />} a="Publish" arrow /></GroupBody>
          <GroupLabel>Technology</GroupLabel>
        </Group>
        <Group $w={210}>
          <GroupBody $pad={6}>
            <Big w={66} icon={<PublishDoc c="#d98848" />} a="Publish" u arrow />
            <Big w={66} icon={<ImportDoc />} a="Import" u arrow />
            <Divider $h={73} $l={1} $r={3} $t={2} />
            <Big w={66} icon={<ArcGis />} a="ArcGIS" arrow />
          </GroupBody>
          <GroupLabel>Technologies</GroupLabel>
        </Group>
      </Ribbon>

      <Strip>
        <Svg w={8} h={20}><path d="M5 2v16" stroke="#222" strokeWidth="2" strokeDasharray="2 3" /></Svg>
        <StripIcon $w={29}><StripGlyph name="new" /></StripIcon>
        <StripIcon $w={32}><StripGlyph name="open" /></StripIcon>
        <StripIcon $w={12}><Triangle $s={4} /></StripIcon>
        <StripIcon $w={31} $dim><StripGlyph name="save" /></StripIcon>
        <Divider $h={27} $l={3} $r={3} />
        {['cut', 'copy', 'paste', 'undo', 'redo'].map(n => <StripIcon key={n} $w={28.5} $dim><StripGlyph name={n} /></StripIcon>)}
        <Divider $h={27} $l={4} $r={5} />
        {['preview', 'layout', 'print'].map(n => <StripIcon key={n} $w={27.5}><StripGlyph name={n} /></StripIcon>)}
        <Divider $h={27} $l={5} $r={3} />
        {['find', 'find2'].map(n => <StripIcon key={n} $w={30}><StripGlyph name={n} /></StripIcon>)}
        <Divider $h={27} $l={2} />
        <Combo>&lt;default&gt;<Triangle $s={4} $c="#222" /></Combo>
        <Divider $h={27} $r={8} />
        <HelpIcon>?</HelpIcon>
        <Svg w={20} h={20}><path d="M7 17h8l-4 4z" fill="#222" /></Svg>
      </Strip>
      <SecondStrip>
        <Svg w={290} h={12}>
          <path d="M5 8v4" stroke="#222" strokeWidth="2" strokeDasharray="2 2" />
          <path d="M16 9h16M45 9h18v3M74 10h5M126 9h12v3M153 9h7v3M163 9h7v3" stroke="#7c7c9c" strokeWidth="2" />
          <path d="M182 12l4-5 1 5M193 12l5-5v5" stroke="#333" strokeWidth="1.400" /><path d="M212 10l4-2M240 8l10 4" stroke="#8a8b5a" strokeWidth="2" />
        </Svg>
      </SecondStrip>
      <WideBar>
        <WideField />
        <Svg w={214} h={28}><path d="M194 6h3M199 6h3M204 6h3" stroke="#555" strokeWidth="4" /></Svg>
        <Divider $h={27} $r={8} />
        <Burger />
      </WideBar>

      <Work>
        <SidePane>
          <SideHead>
            <Triangle $s={6} $c="#262626" />
            <Svg w={9} h={12}><path d="M2.500 7V1h4v6M0 7h9M4.500 7v5M5.700 1v6" stroke="#262626" strokeWidth="1.200" /></Svg>
            <CloseX />
          </SideHead>
          <SideBody><div>neration</div><div>ogies</div></SideBody>
        </SidePane>
        <Splitter />
        <Center>
          <DiagramHead>
            <Svg w={10} h={12}><path d="M5 1L1 6l4 5M9.500 1l-4 5 4 5" stroke="#111" strokeWidth="1.500" /></Svg>
            <Svg w={36} h={16} vb="-8 2 40 18">{treeIcons.diagram}</Svg>
            <Svg w={9} h={9} />
            <HeadText>Custom Diagram: "Accueil"</HeadText>
            <CloseX s={7} c="#111" />
          </DiagramHead>
          <DiagramTabs>
            <DiagramTab $w={108} $on>{diagTab}Accueil<Svg w={22} h={12}><path d="M11 1l9 10M20 1l-9 10" stroke="#222" strokeWidth="1.300" /></Svg></DiagramTab>
            <DiagramTab $w={146}>{actTab} Animation Reseau</DiagramTab>
            <DiagramTab $w={106}>{actTab}Set d'essaie</DiagramTab>
            <DiagramTab $w={56}>{actTab}Tes</DiagramTab>
            <DiagramTab $w={124}>{clsTab}Règles métiers</DiagramTab>
            <DiagramTab $w={273}>{clsTab}*Fonctionnalités clients - Consomateur</DiagramTab>
            <DiagramTab $w={432}>{clsTab}Fonctionnalités clients - Partenaires<Svg w={187} h={16}><path d="M170 1l7 6-7 6z" fill="#222" /></Svg></DiagramTab>
          </DiagramTabs>
          <CanvasRow>
            <Canvas>
              <PageEdge />
              <Placed $x={665} $y={431} $bold>Objet :</Placed>
              <Placed $x={789} $y={422} $w={527} $h={110} $box $red $pad="7px 0 0 4px">Service de commande en ligne de plats et couverts recyclables</Placed>
              <Placed $x={665} $y={549} $bold>Auteur (s) :</Placed>
              <Placed $x={787} $y={537} $w={195} $h={87} $box $pad="10px 0 0 7px">{'Bedaoui Yassine\nHansen Ludovic\nahmadi abdul javed'}</Placed>
              <Placed $x={665} $y={646} $bold>Version :</Placed>
              <Placed $x={789} $y={637} $w={194} $h={35} $box $red $pad="7px 0 0 4px">V0.1</Placed>
              <Placed $x={665} $y={689} $bold>Date :</Placed>
              <Placed $x={789} $y={680} $w={194} $h={35} $box $red $pad="7px 0 0 4px">28/03/2023</Placed>
              <Placed $x={1090} $y={546} $w={226} $h={175} $box />
              <Placed $x={1120} $y={549}><Logo /></Placed>
              <Stereo $x={1122} $y={733}>«Image»</Stereo>
              <Placed $x={660} $y={758} $w={786} $h={11} $box />
            </Canvas>
            <ScrollColumn>
              <ScrollBtn><Svg w={12} h={7}><path d="M0 7h12L6 1z" fill="#262626" /></Svg></ScrollBtn>
              <ScrollPart $h={81} $c="#6d6d6d" />
              <ScrollPart $h={262} $c="#999" />
              <ScrollPart $h={217} $c="#6d6d6d" />
              <ScrollBtn $flip><Triangle $s={6} $c="#262626" /></ScrollBtn>
            </ScrollColumn>
          </CanvasRow>
        </Center>
        <RightRail><Vertical>Start</Vertical><RailEnd /></RightRail>
      </Work>
      <Status><Minus /><Knob /><Track /><Cloud>CLOUD</Cloud></Status>

      <Taskbar>
        <StartButton><Svg w={20} h={20}><path d="M0 3l9-1.300V9.500H0zM10 1.500L20 0v9.500H10zM0 10.500h9v7.800L0 17zM10 10.500h10V20l-10-1.500z" fill="#000" /></Svg></StartButton>
        <Search>
          <Svg w={20} h={22}><circle cx="13" cy="7.500" r="6.500" stroke="#111" strokeWidth="1.500" /><path d="M8.500 12L1 21" stroke="#111" strokeWidth="1.500" /></Svg>
          <TraySlot $w={199}>Type here to search</TraySlot>
          <Cactus />
        </Search>
        <TaskView><Svg w={20} h={20}><path d="M1 5.500h12v9H1zM1 1v2h12V1M1 19v-2h12v2" stroke="#111" strokeWidth="1.500" /><path d="M18 0v5M18 10v10" stroke="#111" strokeWidth="1.500" /><path d="M16.500 6h3v3h-3z" fill="#111" /></Svg></TaskView>
        {apps.map((a, i) => <TaskItem key={i} $mark={a.mark} $on={a.on}>{a.icon}</TaskItem>)}
        <Tray>
          <TraySlot $w={40}><Svg w={30} h={30}><g fill="#fb9a1c" stroke="#d9790d" strokeWidth=".7"><path d="M2 13h19v6q-10 3-19 0z" /><path d="M10 8h19v5q-10 3-19 0z" /><path d="M1 2h22v5q-11 4-22 0z" /><ellipse cx="12" cy="3" rx="11" ry="2.500" fill="#ffb33c" /></g><path d="M9 22l6 5 6-5" stroke="#c23a12" strokeWidth="3.500" /></Svg></TraySlot>
          <Money $w={77}>GBP...</Money>
          <TraySlot $w={31}><Svg w={17} h={10}><path d="M1 9l7.500-7.500L16 9" stroke="#111" strokeWidth="1.500" /></Svg></TraySlot>
          <TraySlot $w={28}><Svg w={16} h={18}><path d="M1 4.500h9v9H1zM10 8l4-2.500v7L10 10M2 2q4-2 7 0M2 16q4 2 7 0" stroke="#111" strokeWidth="1.300" /></Svg></TraySlot>
          <TraySlot $w={32}><Svg w={20} h={12}><path d="M.7 1h17v10H.7z" stroke="#111" strokeWidth="1.300" /><path d="M3 3h10v6H3zM18 4h1.500v4H18z" fill="#111" /></Svg></TraySlot>
          <TraySlot $w={27}><Svg w={17} h={17}><path d="M1 15A14 14 0 0 1 15 1M4.500 16A11 11 0 0 1 15.500 5.500M8 16a8 8 0 0 1 7.500-7M11 16a5 5 0 0 1 4.500-4" stroke="#222" strokeWidth="1.300" /><circle cx="14.500" cy="15" r="1.700" fill="#111" /></Svg></TraySlot>
          <TraySlot $w={33}><Svg w={21} h={18}><path d="M1 6h3l5-4.500v15L4 12H1zM11.500 6q2 3 0 6M14.500 3.500q4 5.500 0 11M17.500 1q6 8 0 16" stroke="#111" strokeWidth="1.300" /></Svg></TraySlot>
          <TraySlot $w={33}>ENG</TraySlot>
          <Clock>21:39<br />12/06/2023</Clock>
          <Notice><Svg w={22} h={20}><path d="M0 1h20v15H9l-4 4v-4H0z" fill="#0a0a0a" /><path d="M4 5h12M4 8.500h12M4 12h7" stroke="#ddd" strokeWidth="1.200" /></Svg><Badge>2</Badge></Notice>
          <ShowDesktop />
        </Tray>
      </Taskbar>

      <BrowserWindow>
        <WindowTitle $blue $h={40}>Project Browser<WindowIcons $b={4}><MaxBox /><CloseX /></WindowIcons></WindowTitle>
        <BrowserBar>
          <Burger />
          <BarText>Processus métier</BarText>
          <Triangle $s={4} $c="#222" />
          <WindowIcons $gap={10} $l={8}><GreenArrow /><GreenArrow down /></WindowIcons>
        </BrowserBar>
        <Tree>
          {tree.map(([level, state, icon, label], i) => (
            <Row key={i} $level={level}>
              <Expander>{state === 'o' ? <Open /> : state === 's' ? <Shut /> : null}</Expander>
              <RowIcon><Svg w={20} h={20}>{treeIcons[icon]}</Svg></RowIcon>
              {label && <RowText $sel={icon === 'proc'}>{label}</RowText>}
            </Row>
          ))}
        </Tree>
      </BrowserWindow>

      <ToolboxWindow>
        <WindowTitle $h={41}>Toolbox<WindowIcons $b={2}><MaxBox /><CloseX /></WindowIcons></WindowTitle>
        <ToolFrame>
          <MoreTools>More tools...</MoreTools>
          <ToolGroup open name="Custom" />
          <Tools names={['Package', 'Requirement', 'Issue', 'Change', 'Screen', 'UI Control', 'Test Case', 'Entity']} />
          <ToolGroup name="Custom Relationships" />
          <ToolGroup open name="MUSI Concept Metier Links" />
          <Tools names={['Associate', 'Association Class', 'Aggregate', 'Compose', 'Generalize', 'Realize', 'Depend']} />
          <ToolGroup name="Common" />
          <ToolGroup name="Artifacts" />
        </ToolFrame>
      </ToolboxWindow>
    </Screen>
  );
}
